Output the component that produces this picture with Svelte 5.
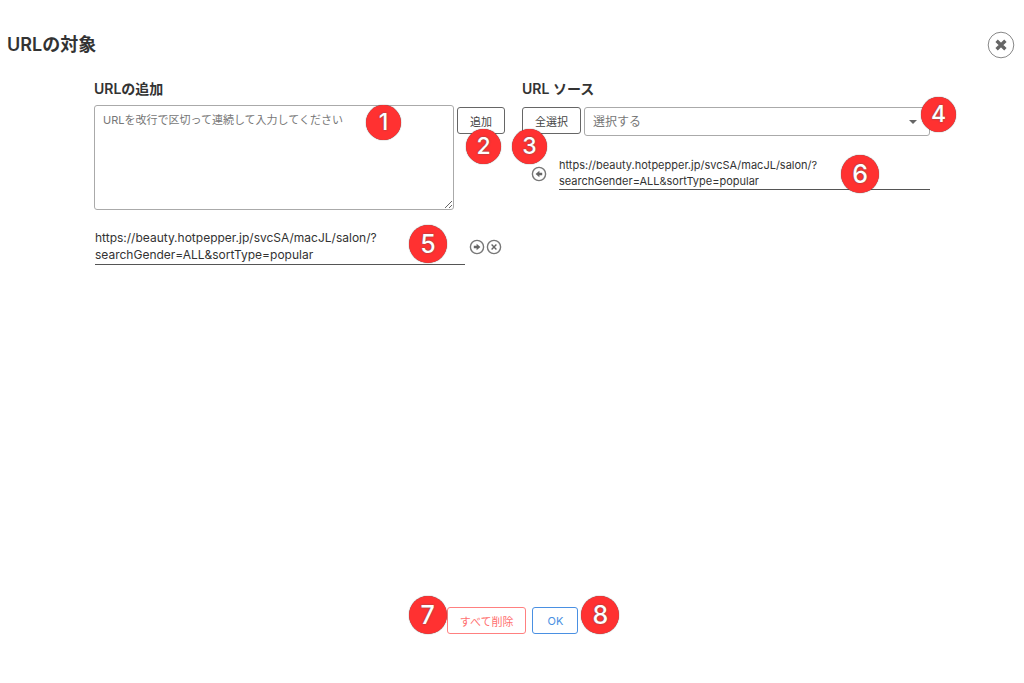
<script lang="ts">
	let draft = $state('');
	let source = $state('');

	const url = 'https://beauty.hotpepper.jp/svcSA/macJL/salon/?searchGender=ALL&sortType=popular';

	let added = $state([url]);
	let sources = $state([url]);

	function addUrls() {
		const lines = draft.split('\n').map((line) => line.trim()).filter(Boolean);
		added = [...added, ...lines];
		draft = '';
	}

	function remove(index: number) {
		added = added.filter((_, i) => i !== index);
	}

	function toSource(index: number) {
		sources = [...sources, added[index]];
		remove(index);
	}

	function toAdded(index: number) {
		added = [...added, sources[index]];
		sources = sources.filter((_, i) => i !== index);
	}

	function selectAll() {
		added = [...added, ...sources];
		sources = [];
	}
</script>

{#snippet arrowIcon(left: boolean)}
	<svg class:flip={left} viewBox="0 0 16 16" width="16" height="16" aria-hidden="true">
		<circle cx="8" cy="8" r="6.6" fill="none" stroke="#777" stroke-width="1.4" />
		<path d="M4.8 6.7h2.8V4.7L11.4 8l-3.8 3.3v-2H4.8z" fill="#666" />
	</svg>
{/snippet}

<div class="dialog">
	<header>
		<h1>URLの対象</h1>
		<button class="close" aria-label="閉じる">
			<svg viewBox="0 0 28 28" width="28" height="28" aria-hidden="true">
				<circle cx="14" cy="14" r="12.8" fill="#fff" stroke="#888" />
				<path d="M9.6 9.8l8.8 8.4M18.4 9.8l-8.8 8.4" stroke="#666" stroke-width="3.4" />
			</svg>
		</button>
	</header>

	<main>
		<section>
			<h2><label for="urls">URLの追加</label></h2>
			<div class="row">
				<div class="field">
					<textarea id="urls" placeholder="URLを改行で区切って連続して入力してください" bind:value={draft}></textarea>
					<span class="badge b1">1</span>
				</div>
				<div class="anchor">
					<button class="btn" onclick={addUrls}>追加</button>
					<span class="badge b2">2</span>
				</div>
			</div>
			<ul class="added">
				{#each added as item, i}
					<li>
						<p>{item}</p>
						<button class="icon" aria-label="ソースへ移動" onclick={() => toSource(i)}>
							{@render arrowIcon(false)}
						</button>
						<button class="icon" aria-label="削除" onclick={() => remove(i)}>
							<svg viewBox="0 0 16 16" width="16" height="16" aria-hidden="true">
								<circle cx="8" cy="8" r="6.6" fill="none" stroke="#777" stroke-width="1.4" />
								<path d="M5.6 5.6l4.8 4.8M10.4 5.6l-4.8 4.8" stroke="#666" stroke-width="1.4" />
							</svg>
						</button>
						{#if i === 0}<span class="badge big b5">5</span>{/if}
					</li>
				{/each}
			</ul>
		</section>

		<section>
			<h2><label for="source">URL ソース</label></h2>
			<div class="row">
				<div class="anchor">
					<button class="btn" onclick={selectAll}>全選択</button>
					<span class="badge b3">3</span>
				</div>
				<div class="field select">
					<select id="source" bind:value={source}>
						<option value="">選択する</option>
					</select>
					<svg class="caret" viewBox="0 0 8 4" width="8" height="4" aria-hidden="true">
						<path d="M0 0h8L4 4z" fill="#666" />
					</svg>
					<span class="badge b4">4</span>
				</div>
			</div>
			<ul class="sources">
				{#each sources as item, i}
					<li>
						<button class="icon" aria-label="追加へ移動" onclick={() => toAdded(i)}>
							{@render arrowIcon(true)}
						</button>
						<p>{item}</p>
						{#if i === 0}<span class="badge big b6">6</span>{/if}
					</li>
				{/each}
			</ul>
		</section>
	</main>

	<footer>
		<div class="anchor">
			<button class="btn danger" onclick={() => (added = [])}>すべて削除</button>
			<span class="badge big b7">7</span>
		</div>
		<div class="anchor">
			<button class="btn primary">OK</button>
			<span class="badge big b8">8</span>
		</div>
	</footer>
</div>

<style>
	:global(body) {
		background: #fff;
	}

	.dialog {
		box-sizing: border-box;
		min-height: 100vh;
		display: flex;
		flex-direction: column;
		padding: 31px 9px 49px 7px;
		color: #333;
		font-family: Inter, 'Noto Sans CJK JP', sans-serif;
	}

	.dialog :is(button, textarea, select) {
		box-sizing: border-box;
		margin: 0;
		font-family: inherit;
	}

	header {
		display: flex;
		justify-content: space-between;
		align-items: center;
		height: 28px;
	}

	h1,
	h2,
	p,
	ul {
		margin: 0;
		padding: 0;
	}

	h1 {
		font-size: 18px;
		line-height: 28px;
		font-weight: 600;
	}

	h2 {
		font-size: 14px;
		line-height: 20px;
		font-weight: 600;
	}

	.close,
	.icon {
		display: block;
		padding: 0;
		border: 0;
		background: none;
		cursor: pointer;
	}

	.close svg,
	.icon svg {
		display: block;
	}

	.flip {
		transform: scaleX(-1);
	}

	main {
		flex: 1;
		display: grid;
		grid-template-columns: 411fr 408fr;
		gap: 17px;
		margin: 20px 85px 0 87px;
	}

	.row {
		display: flex;
		align-items: flex-start;
		gap: 3px;
		margin-top: 6px;
	}

	.field,
	.anchor {
		position: relative;
	}

	.field {
		flex: 1;
	}

	.row .anchor,
	.select {
		margin-top: 2px;
	}

	textarea {
		display: block;
		width: 100%;
		height: 105px;
		padding: 5px 8px;
		border: 1px solid #aaa;
		border-radius: 3px;
		background: #fff;
		font-size: 11px;
		line-height: 18px;
		color: #333;
	}

	textarea::placeholder {
		color: #777;
		opacity: 1;
	}

	select {
		display: block;
		width: 100%;
		height: 29px;
		padding: 0 24px 0 8px;
		border: 1px solid #aaa;
		border-radius: 3px;
		background: #fff;
		appearance: none;
		font-size: 12px;
		color: #777;
	}

	.caret {
		position: absolute;
		right: 13px;
		bottom: 12px;
		pointer-events: none;
	}

	.btn {
		display: block;
		height: 27px;
		padding: 0 12px;
		border: 1px solid #666;
		border-radius: 3px;
		background: #fff;
		font-size: 11px;
		color: #444;
		cursor: pointer;
	}

	.danger {
		border-color: #ff8080;
		color: #ff7070;
	}

	.primary {
		padding: 0 14px;
		border-color: #4a90e2;
		color: #4a90e2;
	}

	li {
		position: relative;
		display: flex;
		align-items: center;
	}

	li p {
		flex: 1;
		border-bottom: 1px solid #555;
		overflow-wrap: anywhere;
	}

	.added {
		margin-top: 19px;
		padding: 0 3px 0 1px;
	}

	.added p {
		margin-right: 4px;
		padding-bottom: 1px;
		font-size: 12px;
		line-height: 17px;
	}

	.added .icon + .icon {
		margin-left: 1px;
	}

	.sources {
		margin-top: 21px;
		padding-left: 9px;
	}

	.sources p {
		margin-left: 12px;
		font-size: 11px;
		line-height: 16px;
	}

	footer {
		display: flex;
		justify-content: center;
		gap: 6px;
		padding-left: 3px;
	}

	.badge {
		position: absolute;
		z-index: 1;
		width: 35px;
		height: 35px;
		border-radius: 50%;
		background: #ff3131;
		box-shadow: 0 0 1px #333;
		color: #fff;
		font-size: 23px;
		line-height: 35px;
		font-weight: 500;
		text-align: center;
		text-shadow: 0 0 2px #555;
		pointer-events: none;
	}

	.big {
		width: 38px;
		height: 38px;
		font-size: 25px;
		line-height: 38px;
	}

	.b1 {
		top: 0;
		right: 53px;
	}

	.b2 {
		top: 22px;
		left: 9px;
	}

	.b3 {
		top: 22px;
		left: -10px;
	}

	.b4 {
		top: -10px;
		right: -26px;
	}

	.b5 {
		top: -4px;
		right: 55px;
	}

	.b6 {
		top: -2px;
		right: 51px;
	}

	.b7 {
		top: -11px;
		right: 100%;
	}

	.b8 {
		top: -11px;
		left: calc(100% + 3px);
	}
</style>
